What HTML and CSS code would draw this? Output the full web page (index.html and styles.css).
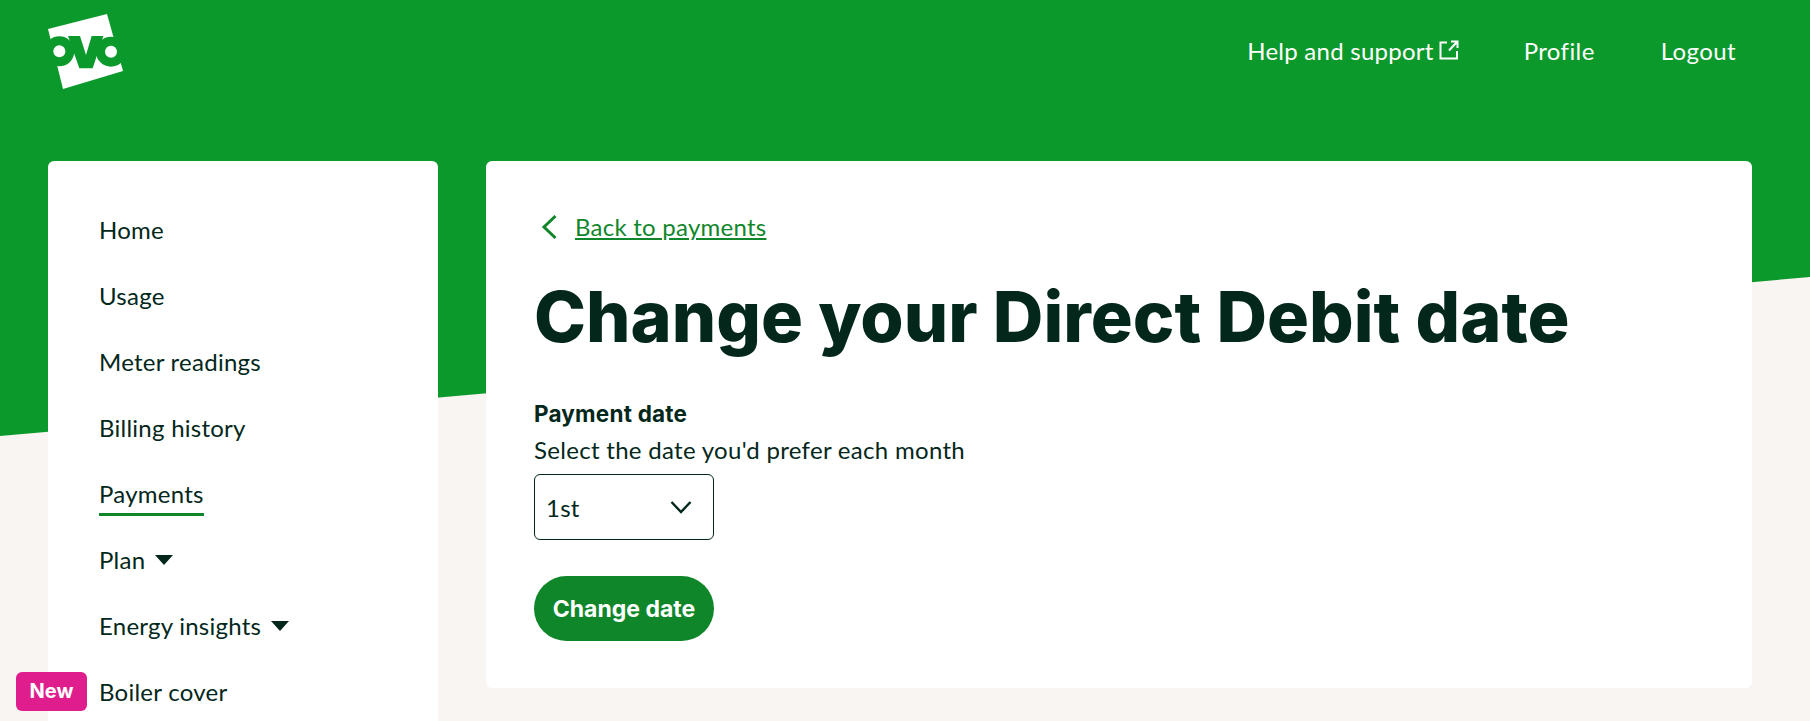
FILE: index.html
```html
<!DOCTYPE html>
<html lang="en">
<head>
    <meta charset="UTF-8">
    <title>Change your Direct Debit date</title>
    <link rel="stylesheet" href="styles.css">
</head>
<body>
    <div class="page">
        <header class="topbar">
            <a href="#" class="logo" aria-label="OVO">
                <svg width="90" height="90" viewBox="0 0 270 270">
                    <path fill="#fff" d="M24 72L201 27L249 198L69 252Z"/>
                    <g fill="#0c992c">
                        <circle cx="58" cy="139" r="45"/>
                        <circle cx="213" cy="140" r="45"/>
                        <path d="M84 93L120 93L138 150L155 93L190 93L158 190L118 190Z"/>
                    </g>
                    <circle cx="58" cy="139" r="18" fill="#fff"/>
                    <circle cx="213" cy="140" r="18" fill="#fff"/>
                </svg>
            </a>
            <nav class="topnav">
                <a href="#" class="help-link">Help and support<svg width="20" height="20" viewBox="0 0 20 20" fill="none" stroke="#fff" stroke-width="2">
                        <path d="M8 2.5H1.5V18.5H18V11"/>
                        <path d="M10 10.5L18 2M12 1.5H18.5V8"/>
                    </svg></a>
                <a href="#">Profile</a>
                <a href="#">Logout</a>
            </nav>
        </header>

        <div class="layout">
            <aside class="sidebar">
                <ul>
                    <li><a href="#">Home</a></li>
                    <li><a href="#">Usage</a></li>
                    <li><a href="#">Meter readings</a></li>
                    <li><a href="#">Billing history</a></li>
                    <li><a href="#" class="active">Payments</a></li>
                    <li><a href="#">Plan</a><span class="caret"></span></li>
                    <li><a href="#">Energy insights</a><span class="caret"></span></li>
                    <li><span class="badge">New</span><a href="#">Boiler cover</a></li>
                </ul>
            </aside>

            <main class="card">
                <a href="#" class="back-link">
                    <svg width="16" height="26" viewBox="0 0 16 26" fill="none" stroke="#10862b" stroke-width="3">
                        <path d="M14.5 2L3 13L14.5 24"/>
                    </svg>
                    <span>Back to payments</span>
                </a>
                <h1>Change your Direct Debit date</h1>
                <label class="field-label" for="paymentDate">Payment date</label>
                <p class="field-hint">Select the date you'd prefer each month</p>
                <div class="select" id="paymentDate">
                    <span>1st</span>
                    <svg width="22" height="14" viewBox="0 0 22 14" fill="none" stroke="#03271b" stroke-width="2.4">
                        <path d="M1.5 2L11 12L20.5 2"/>
                    </svg>
                </div>
                <button class="btn">Change date</button>
            </main>
        </div>
    </div>
</body>
</html>
```

FILE: styles.css
```css
* {
    box-sizing: border-box;
}

html, body {
    height: 100%;
}

body {
    margin: 0;
    overflow: hidden;
    background-color: #f9f5f2;
    color: #03271b;
    font-family: 'Lato', 'Open Sans', sans-serif;
    letter-spacing: 0.25px;
}

a {
    color: inherit;
    text-decoration: none;
}

.page {
    position: relative;
    height: 721px;
    overflow: hidden;
}

/* green slanted backdrop */
.page::before {
    content: "";
    position: absolute;
    top: 0;
    left: 0;
    width: 100%;
    height: 436px;
    background-color: #0c992c;
    clip-path: polygon(0 0, 100% 0, 100% 277px, 0 436px);
}

.topbar {
    position: relative;
    display: flex;
    justify-content: space-between;
    height: 161px;
    padding: 5px 74px 0 40px;
}

.logo {
    display: block;
    height: 90px;
}

.topnav {
    display: flex;
    gap: 66px;
    padding-top: 32px;
    color: #fff;
    font-size: 24px;
    letter-spacing: 0.4px;
    line-height: 28px;
}

.help-link {
    display: flex;
    align-items: flex-start;
    gap: 5px;
    margin-right: -1px;
    letter-spacing: 0.25px;
}

.help-link svg {
    margin-top: 3px;
}

.layout {
    position: relative;
    display: flex;
    gap: 48px;
    padding: 0 58px 0 48px;
}

.sidebar {
    width: 390px;
    height: 620px;
    padding: 54px 0 0 51px;
    background-color: #fff;
    border-radius: 6px;
}

.sidebar ul {
    margin: 0;
    padding: 0;
    list-style: none;
}

.sidebar li {
    position: relative;
    display: flex;
    align-items: flex-start;
    height: 66px;
    font-size: 24px;
    line-height: 30px;
}

.sidebar .active {
    height: 37px;
    border-bottom: 3px solid #10862b;
}

.caret {
    margin: 10px 0 0 10px;
    border-left: 9.5px solid transparent;
    border-right: 9.5px solid transparent;
    border-top: 10px solid #03271b;
}

.badge {
    position: absolute;
    top: -5px;
    left: -83px;
    width: 71px;
    height: 39px;
    background-color: #df1d8c;
    border-radius: 6px;
    color: #fff;
    font-family: 'Inter', sans-serif;
    font-size: 20px;
    font-weight: 700;
    letter-spacing: 0;
    line-height: 38px;
    text-align: center;
}

.card {
    flex: 1;
    height: 527px;
    padding: 51px 48px 0;
    background-color: #fff;
    border-radius: 6px;
}

.back-link {
    display: flex;
    align-items: center;
    gap: 18px;
    margin-left: 7px;
    color: #10862b;
    font-size: 24px;
    line-height: 30px;
}

.back-link span {
    text-decoration: underline;
}

h1 {
    margin: 32px 0 39px;
    font-family: 'Inter', sans-serif;
    font-size: 70px;
    font-weight: 800;
    letter-spacing: 0;
    line-height: 86px;
}

.field-label {
    display: block;
    font-family: 'Inter', sans-serif;
    font-size: 22.5px;
    font-weight: 700;
    letter-spacing: 0.2px;
    line-height: 30px;
}

.field-hint {
    margin: 6px 0 9px;
    font-size: 24px;
    letter-spacing: 0.3px;
    line-height: 30px;
}

.select {
    display: flex;
    align-items: center;
    justify-content: space-between;
    width: 180px;
    height: 66px;
    padding: 0 21px 0 11px;
    border: 1px solid #03271b;
    border-radius: 6px;
    font-size: 24px;
}

.btn {
    display: block;
    width: 180px;
    height: 65px;
    margin-top: 36px;
    background-color: #10862b;
    border: none;
    border-radius: 33px;
    color: #fff;
    font-family: 'Inter', sans-serif;
    font-size: 23px;
    font-weight: 700;
}
```
